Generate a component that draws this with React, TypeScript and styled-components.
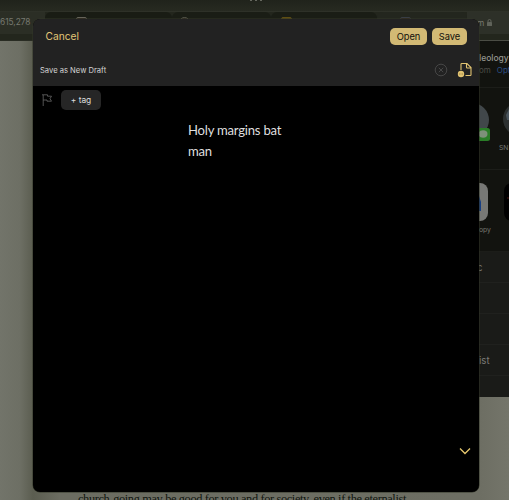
import React from "react";
import styled, { createGlobalStyle } from "styled-components";

const Global = createGlobalStyle`
  *, *::before, *::after { box-sizing: border-box; }
  body { margin: 0; background: #6d6e63; font-family: Inter, "Liberation Sans", sans-serif; }
  button { font: inherit; border: 0; padding: 0; white-space: nowrap; }
`;

const Screen = styled.main`
  position: relative;
  width: 509px;
  height: 500px;
  overflow: hidden;
  display: flex;
  flex-direction: column;
  background: linear-gradient(90deg, #72746a 0, #6d6f64 20px, #5b5d50 33px, #6b6c61 60px, #6d6e63 479px, #74756a 100%);
`;

const StatusStrip = styled.div`
  height: 11px;
  flex: none;
  display: flex;
  justify-content: center;
  gap: 3px;
  padding-left: 3px;
  background: linear-gradient(#20231b, #272a21);
`;

const Dot = styled.i`
  width: 2px;
  height: 1px;
  background: #66685f;
`;

const TabStrip = styled.div`
  height: 30px;
  flex: none;
  display: flex;
  background: #23261d;
  border-top: 1px solid #2e3128;
  border-bottom: 1px solid #292c23;
`;

const Tab = styled.div<{ $w: number; $bg: string; $pad?: number }>`
  width: ${(p) => p.$w}px;
  height: 22px;
  flex: none;
  display: flex;
  align-items: flex-start;
  padding: 5px 0 0 ${(p) => p.$pad ?? 0}px;
  border-radius: 6px 6px 0 0;
  background: ${(p) => p.$bg};
`;

const AddressTab = styled(Tab)`
  border-radius: 0;
  padding-top: 4px;
`;

const Favicon = styled.span<{ $c: string; $fill?: boolean; $round?: boolean }>`
  width: 11px;
  height: 11px;
  border: 1px solid ${(p) => p.$c};
  border-radius: ${(p) => (p.$round ? 6 : 2)}px;
  background: ${(p) => (p.$fill ? p.$c : "#30251d")};
`;

const TabText = styled.span`
  font-size: 8.3px;
  line-height: 12px;
  white-space: nowrap;
  color: #777970;
`;

const EndTab = styled.div`
  flex: 1;
  height: 22px;
  display: flex;
  align-items: center;
  gap: 3px;
  padding: 0 0 1px 10px;
  background: #2d3028;
`;

const Article = styled.p`
  margin: auto 0 -7px 78px;
  width: 340px;
  font: 12.4px/16px "Liberation Serif", serif;
  white-space: nowrap;
  color: #10150f;
  letter-spacing: -0.38px;
`;

const SharePanel = styled.aside`
  position: absolute;
  left: 479px;
  top: 40px;
  width: 30px;
  height: 357px;
  display: flex;
  flex-direction: column;
  border-top: 1px solid #4b4d45;
  background: #12130f;
  color: #777872;
  white-space: nowrap;
`;

const ShareHeader = styled.div`
  height: 47px;
  flex: none;
  padding-top: 12px;
  border-bottom: 1px solid #1c1d19;
  font-size: 8.5px;
  line-height: 11px;
`;

const ShareTitle = styled.div`
  color: #94958e;
  font-weight: 500;
`;

const ShareDetail = styled.div`
  display: flex;
  gap: 6px;
  font-size: 8px;
  line-height: 12px;
  color: #4b4c47;
`;

const OptionLink = styled.span`
  color: #2b4d82;
`;

const ShareRow = styled.div`
  height: 82px;
  flex: none;
  border-bottom: 1px solid #1c1d19;
`;

const RowArt = styled.svg`
  display: block;
  width: 30px;
  height: 54px;
`;

const Caption = styled.div<{ $indent: number }>`
  padding-left: ${(p) => p.$indent}px;
  padding-top: 1px;
  font-size: 6.8px;
  line-height: 10px;
  color: #777872;
`;

const ActionRow = styled.div`
  height: 31px;
  flex: none;
  display: flex;
  align-items: center;
  border-bottom: 1px solid #20211e;
  background: #1a1b18;
  font-size: 9.6px;
  color: #7b7c77;

  &:last-child { height: auto; flex: 1; border: 0; }
`;

const ActionText = styled.span<{ $shift?: number }>`
  margin-left: ${(p) => p.$shift ?? 0}px;
`;

const Modal = styled.section`
  position: absolute;
  left: 33px;
  top: 19px;
  width: 446px;
  height: 473px;
  display: flex;
  flex-direction: column;
  overflow: hidden;
  border-radius: 7px;
  background: #000;
  box-shadow: 0 0 0 0.5px #333629;
`;

const ModalHeader = styled.header`
  height: 36px;
  flex: none;
  display: flex;
  align-items: center;
  gap: 5px;
  padding: 0 12px 1px 12.5px;
  background: #222;
`;

const Cancel = styled.button`
  margin-right: auto;
  padding-bottom: 1px;
  background: none;
  color: #e3c776;
  font-size: 10.2px;
`;

const GoldButton = styled.button<{ $w: number }>`
  width: ${(p) => p.$w}px;
  height: 17px;
  border-radius: 5px;
  background: #d2b974;
  color: #11100c;
  font-size: 9.3px;
  line-height: 17px;
`;

const DraftBar = styled.div`
  height: 31px;
  flex: none;
  display: flex;
  align-items: center;
  padding: 0 6.5px 1px 7px;
  background: #222;
`;

const DraftTitle = styled.span`
  margin-right: auto;
  padding-top: 1px;
  font-size: 7.6px;
  color: #d4d4d4;
`;

const ClearIcon = styled.svg`
  width: 14px;
  height: 14px;
  margin-right: 9px;
`;

const FileIcon = styled.svg`
  width: 16px;
  height: 16px;
`;

const TagBar = styled.div`
  height: 28px;
  flex: none;
  display: flex;
  align-items: center;
  padding-left: 8px;
`;

const FlagIcon = styled.svg`
  width: 13px;
  height: 14px;
  margin-right: 7px;
`;

const TagButton = styled.button`
  width: 40px;
  height: 20px;
  border-radius: 5px;
  background: #262626;
  color: #ddd;
  font-size: 8.4px;
`;

const Editor = styled.div`
  flex: 1;
  padding: 6px 0 0 155px;
  font: 13.1px/21px Lato, "Noto Sans", sans-serif;
  color: #dfdfdf;
  letter-spacing: -0.22px;
`;

const EditorLine = styled.div`
  white-space: nowrap;
`;

const ModalFooter = styled.footer`
  height: 49px;
  flex: none;
  display: flex;
  justify-content: flex-end;
  padding: 2px 8px 0 0;
`;

const Chevron = styled.svg`
  width: 12px;
  height: 12px;
`;

export default function App() {
  return (
    <Screen>
      <Global />
      <StatusStrip><Dot /><Dot /><Dot /></StatusStrip>
      <TabStrip>
        <AddressTab $w={45} $bg="#2b2e25"><TabText>615,278</TabText></AddressTab>
        <Tab $w={127} $bg="#191c14" $pad={31}><Favicon $c="#66645a" /></Tab>
        <Tab $w={99} $bg="#1a1d15" $pad={7}><Favicon $c="#57594e" $round /></Tab>
        <Tab $w={106} $bg="#1a1d15" $pad={10}><Favicon $c="#5f4e13" $fill /></Tab>
        <Tab $w={90} $bg="#23261e" $pad={23}><Favicon $c="#383d45" /></Tab>
        <EndTab>
          <TabText>m</TabText>
          <svg width="5" height="7" viewBox="0 0 5 7" fill="none">
            <path d="M1 3V2a1.5 1.5 0 013 0v1" stroke="#60635a" />
            <rect y="3" width="5" height="4" rx=".6" fill="#60635a" />
          </svg>
        </EndTab>
      </TabStrip>
      <Article>church-going may be good for you and for society, even if the eternalist</Article>

      <SharePanel>
        <ShareHeader>
          <ShareTitle>leology</ShareTitle>
          <ShareDetail>om <OptionLink>Opt</OptionLink></ShareDetail>
        </ShareHeader>
        <ShareRow>
          <RowArt viewBox="0 0 30 54">
            <circle cx="-7" cy="32" r="17" fill="#41474a" />
            <circle cx="41" cy="31" r="17" fill="#2c3030" />
            <path d="M27 27l3-6v11h-2z" fill="#4a555e" />
            <rect x="-2" y="40" width="13" height="13" rx="2.5" fill="#2a7d27" />
            <ellipse cx="4" cy="46" rx="4.5" ry="3.7" fill="#7d9179" />
          </RowArt>
          <Caption $indent={20}>SN</Caption>
        </ShareRow>
        <ShareRow>
          <RowArt viewBox="0 0 30 54">
            <rect x="-29" y="13" width="38" height="38" rx="8" fill="#777875" />
            <path d="M0 26l2 6v9H0z" fill="#173f83" />
            <rect x="25" y="13" width="38" height="38" rx="8" fill="#000" />
            <path d="M28 28h2" stroke="#4b1613" />
          </RowArt>
          <Caption $indent={0}>opy</Caption>
        </ShareRow>
        <ActionRow><ActionText $shift={-2}>c</ActionText></ActionRow>
        <ActionRow /><ActionRow />
        <ActionRow><ActionText>ist</ActionText></ActionRow>
        <ActionRow />
      </SharePanel>

      <Modal>
        <ModalHeader>
          <Cancel>Cancel</Cancel>
          <GoldButton $w={37}>Open</GoldButton>
          <GoldButton $w={35}>Save</GoldButton>
        </ModalHeader>
        <DraftBar>
          <DraftTitle>Save as New Draft</DraftTitle>
          <ClearIcon viewBox="0 0 14 14" fill="none" stroke="#515151" strokeWidth=".8">
            <circle cx="7" cy="7" r="5.8" /><path d="M4.8 4.8l4.4 4.4m0-4.4L4.8 9.2" />
          </ClearIcon>
          <FileIcon viewBox="0 0 16 16" fill="none">
            <path d="M4 8V2.3Q4 1.5 4.8 1.5H10l4 4v7.2q0 .8-.8.8H8.5M9.5 1.8v3.5q0 .7.7.7h3.5" stroke="#e1c371" strokeWidth="1.1" />
            <circle cx="4" cy="12" r="3.2" fill="#e1c371" />
            <path d="M2.2 12h3.6" stroke="#8a7440" strokeDasharray=".8 .6" />
          </FileIcon>
        </DraftBar>
        <TagBar>
          <FlagIcon viewBox="0 0 13 14" fill="none" stroke="#686868" strokeWidth=".8">
            <path d="M2.2 13V2M1 1.8h5.5v1.4h4L9 5.7l1.5 2.5H6V7H2.2" />
          </FlagIcon>
          <TagButton>+ tag</TagButton>
        </TagBar>
        <Editor>
          <EditorLine>Holy margins bat</EditorLine>
          <EditorLine>man</EditorLine>
        </Editor>
        <ModalFooter>
          <Chevron viewBox="0 0 12 12" fill="none" stroke="#e7c86e" strokeWidth="1.3">
            <path d="M1 3.5l5 5 5-5" />
          </Chevron>
        </ModalFooter>
      </Modal>
    </Screen>
  );
}
